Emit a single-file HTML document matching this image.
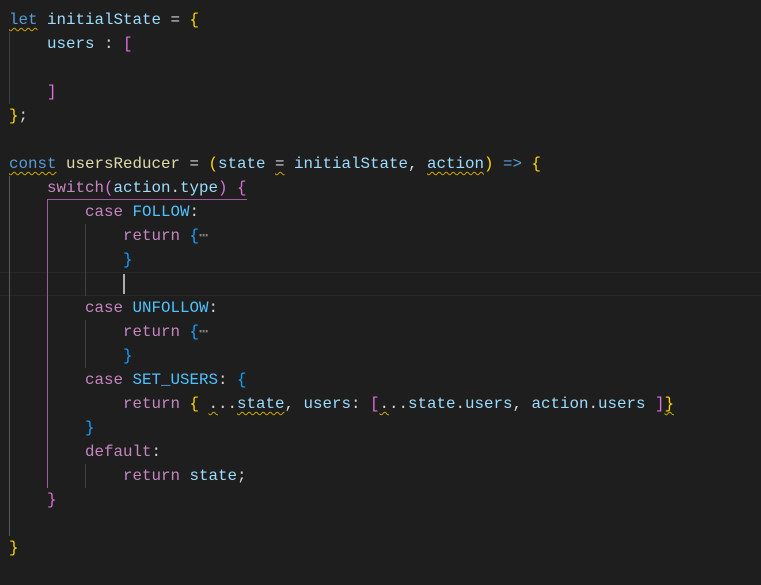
<!DOCTYPE html>
<html><head><style>
body{margin:0;background:#1e1e1e;width:761px;height:585px;overflow:hidden;position:relative}
.l{position:absolute;left:9px;height:24px;line-height:24px;white-space:pre;font-family:"Liberation Mono",monospace;font-size:15.83px;color:#d4d4d4}
.k{color:#569cd6}.c{color:#c586c0}.v{color:#9cdcfe}.n{color:#4fc1ff}.f{color:#dcdcaa}
.g{color:#ffd700}.p{color:#da70d6}.b{color:#179fff}.d{color:#808080}
.w{text-decoration:underline wavy #cca700;text-decoration-thickness:1px;text-underline-offset:3px}
.vg{position:absolute;width:1px;background:#404040}
</style></head><body>
<div style="position:absolute;left:0;top:272px;width:761px;height:22px;border:1px solid #282828;border-left:0;border-right:0;background:#1e1e1e"></div>
<div class="vg" style="left:9px;top:32px;height:72px"></div>
<div class="vg" style="left:9px;top:176px;height:360px;background:#585858"></div>
<div class="vg" style="left:47px;top:200px;height:288px;background:#a05a9c"></div>
<div style="position:absolute;left:47px;top:199px;width:200px;height:1px;background:#a05a9c"></div>
<div class="vg" style="left:85px;top:224px;height:72px"></div>
<div class="vg" style="left:85px;top:320px;height:48px"></div>
<div class="vg" style="left:85px;top:464px;height:24px"></div>
<div style="position:absolute;left:123px;top:274px;width:2px;height:20px;background:#aeafad"></div>
<div class="l" style="top:8px"><span class="k w">let</span> <span class="v">initialState</span> = <span class="g">{</span></div>
<div class="l" style="top:32px">    <span class="v">users</span> : <span class="p">[</span></div>
<div class="l" style="top:80px">    <span class="p">]</span></div>
<div class="l" style="top:104px"><span class="g">}</span>;</div>
<div class="l" style="top:152px"><span class="k w">const</span> <span class="f">usersReducer</span> = <span class="g">(</span><span class="v">state</span> <span class="w">=</span> <span class="v">initialState</span>, <span class="v w">action</span><span class="g">)</span> <span class="k">=&gt;</span> <span class="g">{</span></div>
<div class="l" style="top:176px">    <span class="c">switch</span><span class="p">(</span><span class="v">action</span>.<span class="v">type</span><span class="p">)</span> <span class="p">{</span></div>
<div class="l" style="top:200px">        <span class="c">case</span> <span class="n">FOLLOW</span>:</div>
<div class="l" style="top:224px">            <span class="c">return</span> <span class="b">{</span><span class="d">⋯</span></div>
<div class="l" style="top:248px">            <span class="b">}</span></div>
<div class="l" style="top:296px">        <span class="c">case</span> <span class="n">UNFOLLOW</span>:</div>
<div class="l" style="top:320px">            <span class="c">return</span> <span class="b">{</span><span class="d">⋯</span></div>
<div class="l" style="top:344px">            <span class="b">}</span></div>
<div class="l" style="top:368px">        <span class="c">case</span> <span class="n">SET_USERS</span>: <span class="b">{</span></div>
<div class="l" style="top:392px">            <span class="c">return</span> <span class="g">{</span> <span class="w">.</span>..<span class="v w">state</span>, <span class="v">users</span>: <span class="p">[</span><span class="w">.</span>..<span class="v">state</span>.<span class="v">users</span>, <span class="v">action</span>.<span class="v">users</span> <span class="p">]</span><span class="g w">}</span></div>
<div class="l" style="top:416px">        <span class="b">}</span></div>
<div class="l" style="top:440px">        <span class="c">default</span>:</div>
<div class="l" style="top:464px">            <span class="c">return</span> <span class="v">state</span>;</div>
<div class="l" style="top:488px">    <span class="p">}</span></div>
<div class="l" style="top:536px"><span class="g">}</span></div>
</body></html>
